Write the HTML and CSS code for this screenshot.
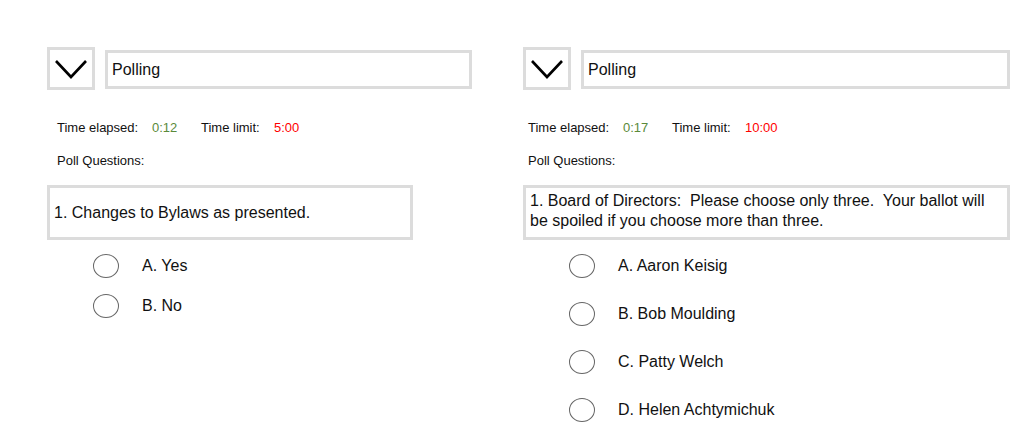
FILE: index.html
```html
<!DOCTYPE html>
<html lang="en">
<head>
  <meta charset="UTF-8">
  <meta name="viewport" content="width=device-width, initial-scale=1.0">
  <title>Polling</title>
  <link rel="stylesheet" href="styles.css">
</head>
<body>
  <div class="board">
    <div class="panel panel-left">
      <div class="header">
        <div class="toggle">
          <svg width="32" height="20" viewBox="0 0 32 20"><path d="M1 2 L16 18 L31 2" fill="none" stroke="#000" stroke-width="2.6"/></svg>
        </div>
        <div class="title">Polling</div>
      </div>
      <div class="meta">
        <p class="timer">
          <span class="label-elapsed">Time elapsed:</span><span class="elapsed">0:12</span><span class="label-limit">Time limit:</span><span class="limit">5:00</span>
        </p>
        <p class="heading">Poll Questions:</p>
      </div>
      <div class="question short">1. Changes to Bylaws as presented.</div>
      <ul class="options">
        <li><span class="radio"></span>A. Yes</li>
        <li><span class="radio"></span>B. No</li>
      </ul>
    </div>

    <div class="panel panel-right">
      <div class="header">
        <div class="toggle">
          <svg width="32" height="20" viewBox="0 0 32 20"><path d="M1 2 L16 18 L31 2" fill="none" stroke="#000" stroke-width="2.6"/></svg>
        </div>
        <div class="title">Polling</div>
      </div>
      <div class="meta">
        <p class="timer">
          <span class="label-elapsed">Time elapsed:</span><span class="elapsed">0:17</span><span class="label-limit">Time limit:</span><span class="limit">10:00</span>
        </p>
        <p class="heading">Poll Questions:</p>
      </div>
      <div class="question tall">1. Board of Directors:&nbsp; Please choose only three.&nbsp; Your ballot will be spoiled if you choose more than three.</div>
      <ul class="options spaced">
        <li><span class="radio"></span>A. Aaron Keisig</li>
        <li><span class="radio"></span>B. Bob Moulding</li>
        <li><span class="radio"></span>C. Patty Welch</li>
        <li><span class="radio"></span>D. Helen Achtymichuk</li>
      </ul>
    </div>
  </div>
</body>
</html>
```

FILE: styles.css
```css
body {
  font-family: "Liberation Sans", Arial, sans-serif;
  background: #fff;
  color: #111;
  margin: 0;
  padding: 47px 0 0 47px;
}

.board {
  display: flex;
  gap: 51px;
}

.panel {
  display: flex;
  flex-direction: column;
}

.panel-left {
  width: 425px;
}

.panel-right {
  width: 487px;
}

.header {
  display: flex;
  align-items: center;
  gap: 10px;
  height: 43px;
}

.toggle {
  width: 48px;
  height: 43px;
  box-sizing: border-box;
  border: 3px solid #dcdcdc;
  display: flex;
  align-items: center;
  justify-content: center;
}

.title {
  flex: 1;
  height: 39px;
  margin-top: 2px;
  box-sizing: border-box;
  border: 3px solid #dcdcdc;
  padding-left: 4px;
  display: flex;
  align-items: center;
  font-size: 16px;
}

.meta {
  padding-left: 10px;
  font-size: 13px;
}

.panel-right .meta {
  padding-left: 5px;
}

.meta p {
  margin: 0;
  line-height: 16px;
}

.timer {
  margin-top: 30px !important;
  display: flex;
}

.heading {
  margin-top: 17px !important;
}

.label-elapsed {
  width: 95px;
}

.elapsed {
  width: 49px;
  color: #5a8a3a;
}

.label-limit {
  width: 73px;
}

.limit {
  color: #ff0000;
}

.question {
  margin-top: 16px;
  min-height: 55px;
  box-sizing: border-box;
  border: 3px solid #dcdcdc;
  padding: 2px 4px;
  display: flex;
  align-items: center;
  font-size: 16px;
  line-height: 20px;
}

.question.short {
  width: 366px;
}

.question.tall {
  align-items: flex-start;
  padding-top: 3px;
}

.options {
  list-style: none;
  margin: 14px 0 0 46px;
  padding: 0;
  display: flex;
  flex-direction: column;
  gap: 16px;
  font-size: 16px;
}

.options.spaced {
  gap: 24px;
}

.options li {
  display: flex;
  align-items: center;
  height: 24px;
}

.radio {
  width: 26px;
  height: 24px;
  box-sizing: border-box;
  border: 1px solid #666;
  border-radius: 50%;
  margin-right: 23px;
}
```
